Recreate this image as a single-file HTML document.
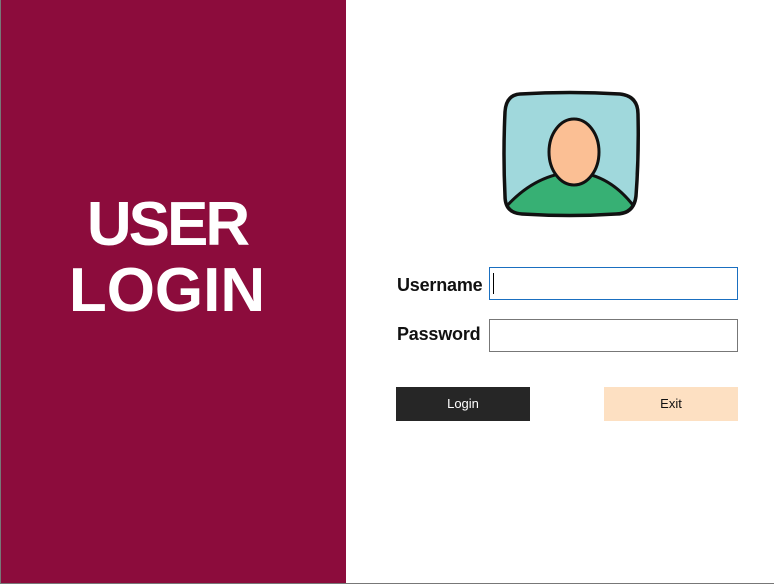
<!DOCTYPE html>
<html><head><style>
body{margin:0;width:774px;height:584px;overflow:hidden;background:#fff;font-family:"Liberation Sans",sans-serif;position:relative}
.left{position:absolute;left:0;top:0;width:346px;height:584px;background:#8c0c3c;border-left:1px solid #777;box-sizing:border-box}
.t{position:absolute;left:0;width:332px;text-align:center;color:#fff;font-weight:bold;font-size:62px;line-height:66px}
.bb{position:absolute;left:0;bottom:0;width:774px;height:1px;background:#777}
.lbl{position:absolute;left:397px;font-size:18px;font-weight:bold;color:#111;letter-spacing:-0.2px}
.in{position:absolute;left:489px;width:249px;height:33px;box-sizing:border-box;border:1px solid #777;background:#fff}
.btn{position:absolute;top:387px;width:134px;height:34px;font-size:13px;text-align:center;line-height:34px}
</style></head><body>
<div class="left">
<div class="t" style="top:192px;letter-spacing:-3px">USER</div>
<div class="t" style="top:258px">LOGIN</div>
</div>
<div class="bb"></div>
<svg style="position:absolute;left:500px;top:90px" width="142" height="130" viewBox="0 0 142 130">
<defs><clipPath id="c"><path d="M20 4 Q70 1 120 4 Q138 6 138 24 Q139 66 136 106 Q134 124 116 124 Q70 127 22 124 Q5 123 5 106 Q3 64 5 22 Q6 5 20 4Z"/></clipPath></defs>
<path d="M20 4 Q70 1 120 4 Q138 6 138 24 Q139 66 136 106 Q134 124 116 124 Q70 127 22 124 Q5 123 5 106 Q3 64 5 22 Q6 5 20 4Z" fill="#a0d8dc"/>
<g clip-path="url(#c)">
<path d="M5 118 Q35 84 74 82 Q112 84 138 122 L138 130 L5 130Z" fill="#37b074" stroke="#111" stroke-width="3"/>
</g>
<ellipse cx="74" cy="62" rx="25" ry="33" fill="#fbbf94" stroke="#111" stroke-width="3"/>
<path d="M20 4 Q70 1 120 4 Q138 6 138 24 Q139 66 136 106 Q134 124 116 124 Q70 127 22 124 Q5 123 5 106 Q3 64 5 22 Q6 5 20 4Z" fill="none" stroke="#111" stroke-width="3.5"/>
</svg>
<div class="lbl" style="top:275px">Username</div>
<div class="lbl" style="top:324px">Password</div>
<div class="in" style="top:267px;border-color:#1a6fc0"><div style="position:absolute;left:3px;top:5px;width:1px;height:21px;background:#000"></div></div>
<div class="in" style="top:319px"></div>
<div class="btn" style="left:396px;background:#262626;color:#fff">Login</div>
<div class="btn" style="left:604px;background:#fde0c2;color:#111">Exit</div>
</body></html>
